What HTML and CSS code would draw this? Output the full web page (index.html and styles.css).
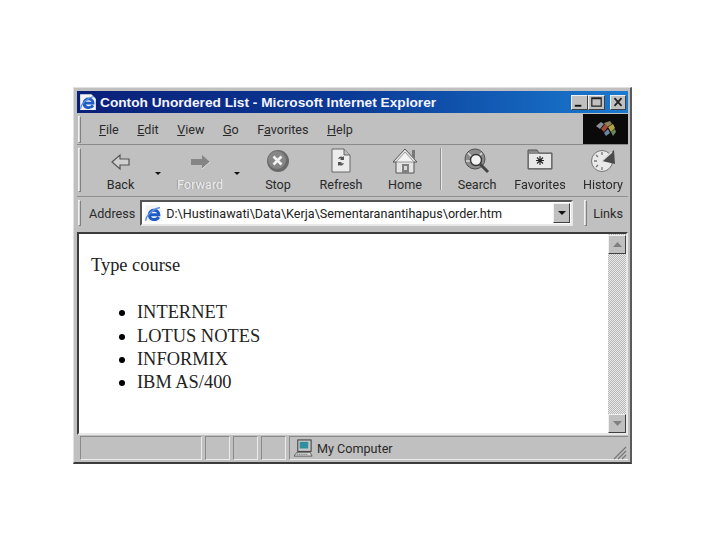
FILE: index.html
```html
<!DOCTYPE html>
<html lang="en">
<head>
<meta charset="utf-8">
<title>Contoh Unordered List - Microsoft Internet Explorer</title>
<link rel="stylesheet" href="styles.css">
</head>
<body>
<svg class="defs" width="0" height="0" aria-hidden="true">
  <defs>
    <symbol id="ie" viewBox="0 0 16 16">
      <path d="M1 1h10l4 4v10H1z" fill="#f4f4f4"/>
      <path d="M4.500 9h8c0-5-8-5-8 0s6 5 8 2" fill="none" stroke="#1f5cc4" stroke-width="2.500"/>
      <path d="M1.500 14c0-4 6-10 12-11" fill="none" stroke="#5d93e0" stroke-width="1.200"/>
    </symbol>
  </defs>
</svg>
<main class="window">
  <header class="titlebar">
    <svg class="title-icon" width="18" height="18"><use href="#ie"/></svg>
    <h1 class="title-text">Contoh Unordered List - Microsoft Internet Explorer</h1>
    <div class="caption-buttons">
      <span class="caption-btn"><svg width="16" height="14" viewBox="0 0 16 14"><rect x="3" y="10" width="7" height="2" fill="#111"/></svg></span>
      <span class="caption-btn"><svg width="16" height="14" viewBox="0 0 16 14"><path d="M3 2.500h10v9H3zM3 3.500h10" fill="none" stroke="#222" stroke-width="1.300"/></svg></span>
      <span class="caption-btn caption-close"><svg width="14" height="14" viewBox="0 0 16 14"><path d="M4 2.500l8 9M12 2.500l-8 9" stroke="#222" stroke-width="2"/></svg></span>
    </div>
  </header>

  <nav class="menubar">
    <span class="grip"></span>
    <ul class="menu-items">
      <li><u>F</u>ile</li>
      <li><u>E</u>dit</li>
      <li><u>V</u>iew</li>
      <li><u>G</u>o</li>
      <li>F<u>a</u>vorites</li>
      <li><u>H</u>elp</li>
    </ul>
    <div class="throbber">
      <svg width="26" height="22" viewBox="0 0 26 22">
        <path d="M3 8l5-4 3 2-4 5z" fill="#8a8e96"/>
        <path d="M11 5l6-2 2 3-5 3z" fill="#8f8454"/>
        <path d="M8 11l4-5 3 3-4 5z" fill="#a24a38"/>
        <path d="M15 9l5-3 2 4-4 4z" fill="#b3a24a"/>
        <path d="M11 15l4-4 2 4-4 3z" fill="#6a83a8"/>
        <path d="M18 14l4-3 1 3-3 4z" fill="#68885a"/>
      </svg>
    </div>
  </nav>

  <section class="toolbar">
    <span class="grip"></span>
    <div class="tool tool-back">
      <svg width="24" height="20" viewBox="0 0 24 20"><path d="M3 10l8-7v4h9v6h-9v4z" fill="#d0d0d0" stroke="#555" stroke-width="1.200"/></svg>
      <span>Back</span>
    </div>
    <svg class="drop drop-back" width="6" height="3" viewBox="0 0 6 3"><path d="M0 0h6L3 3z" fill="#111"/></svg>
    <div class="tool tool-forward">
      <svg width="24" height="20" viewBox="0 0 24 20"><path d="M22 10l-8-7v4H3v6h11v4z" fill="#858585"/><path d="M14 17l8-7" stroke="#e6e6e6"/></svg>
      <span class="disabled">Forward</span>
    </div>
    <svg class="drop drop-forward" width="6" height="3" viewBox="0 0 6 3"><path d="M0 0h6L3 3z" fill="#111"/></svg>
    <div class="tool tool-stop">
      <svg width="24" height="24" viewBox="0 0 24 24"><circle cx="12" cy="12" r="11" fill="#6a6a6a"/><circle cx="11" cy="11" r="9" fill="#868686"/><path d="M7.500 7.500l8 8M15.500 7.500l-8 8" stroke="#f2f2f2" stroke-width="2.600"/></svg>
      <span>Stop</span>
    </div>
    <div class="tool tool-refresh">
      <svg width="22" height="25" viewBox="0 0 22 25"><path d="M2 1h12l6 6v17H2z" fill="#ececec" stroke="#666"/><path d="M14 1v6h6" fill="#bbb" stroke="#666"/><path d="M8 11c1-3 4-3 5-2l1-1v4h-4l1-1c-1-1-2 0-3 0zM14 15c-1 3-4 3-5 2l-1 1v-4h4l-1 1c1 1 2 0 3 0z" fill="#555"/></svg>
      <span>Refresh</span>
    </div>
    <div class="tool tool-home">
      <svg width="26" height="26" viewBox="0 0 26 26"><path d="M20 2h3v9l-3-3z" fill="#777"/><path d="M13 1L1 14h3v11h18V14h3z" fill="#e4e4e4" stroke="#555"/><path d="M13 4L4 14h18z" fill="#f2f2f2" stroke="#777" stroke-width=".7"/><rect x="10" y="16" width="7" height="9" fill="#808080"/><rect x="12" y="18" width="3" height="4" fill="#d8d8d8"/></svg>
      <span>Home</span>
    </div>
    <span class="separator"></span>
    <div class="tool tool-search">
      <svg width="28" height="26" viewBox="0 0 28 26"><circle cx="12" cy="11" r="10" fill="#8c8c8c" stroke="#505050"/><path d="M5 5l4 4M19 5l-4 4M3 13h4" stroke="#dcdcdc" stroke-width="1.500"/><circle cx="13" cy="12" r="5.500" fill="#f2f2f2" stroke="#333" stroke-width="1.400"/><path d="M17 16l8 8" stroke="#444" stroke-width="3"/></svg>
      <span>Search</span>
    </div>
    <div class="tool tool-favorites">
      <svg width="26" height="22" viewBox="0 0 26 22"><path d="M1 5V2h9l2 3h13v16H1z" fill="#8a8a8a" stroke="#555"/><rect x="2" y="6" width="22" height="14" fill="#e8e8e8"/><path d="M13 8v9M9 12.500h8M10 9.500l6 6M16 9.500l-6 6" stroke="#222" stroke-width="1.100"/></svg>
      <span>Favorites</span>
    </div>
    <div class="tool tool-history">
      <svg width="26" height="24" viewBox="0 0 26 24"><circle cx="12" cy="13" r="10.500" fill="#e9e9e9" stroke="#777"/><path d="M12 13L24 2l1 14z" fill="#4a4a4a"/><path d="M12 13l10-9" stroke="#ddd" stroke-width="1.400"/><path d="M12 4v3M4 13h3M6 7l2 2M6 19l2-2M12 22v-3" stroke="#777" stroke-width="1.300"/></svg>
      <span>History</span>
    </div>
  </section>

  <section class="addressbar">
    <span class="grip"></span>
    <span class="address-label">Address</span>
    <div class="address-field">
      <svg class="page-icon" width="19" height="19"><use href="#ie"/></svg>
      <span class="address-text">D:\Hustinawati\Data\Kerja\Sementaranantihapus\order.htm</span>
      <span class="combo-btn"><svg width="8" height="4" viewBox="0 0 8 4"><path d="M0 0h8L4 4z" fill="#111"/></svg></span>
    </div>
    <span class="grip grip-links"></span>
    <span class="links-label">Links</span>
  </section>

  <section class="viewport">
    <article class="page">
      <p class="lead">Type course</p>
      <ul class="course-list">
        <li>INTERNET</li>
        <li>LOTUS NOTES</li>
        <li>INFORMIX</li>
        <li>IBM AS/400</li>
      </ul>
    </article>
    <div class="scrollbar">
      <span class="scroll-btn"><svg width="9" height="5" viewBox="0 0 9 5"><path d="M4.500 0L9 5H0z" fill="#808080"/></svg></span>
      <span class="scroll-track"></span>
      <span class="scroll-btn"><svg width="9" height="5" viewBox="0 0 9 5"><path d="M0 0h9L4.500 5z" fill="#808080"/></svg></span>
    </div>
  </section>

  <footer class="statusbar">
    <span class="status-cell status-main"></span>
    <span class="status-cell status-small"></span>
    <span class="status-cell status-small"></span>
    <span class="status-cell status-small"></span>
    <span class="status-zone">
      <svg width="19" height="19" viewBox="0 0 20 20"><rect x="4" y="1" width="14" height="12" fill="#c8c8c8" stroke="#333"/><rect x="6" y="3" width="9" height="7" fill="#2f8f9f"/><path d="M3 14h14l2 4H0z" fill="#d8d8d8" stroke="#444" stroke-width=".8"/><path d="M3 16h12" stroke="#444" stroke-dasharray="1 1"/></svg>
      My Computer
    </span>
    <svg class="resize-grip" width="15" height="15" viewBox="0 0 15 15"><path d="M14 2L2 14M14 6l-8 8M14 10l-4 4" stroke="#777" stroke-width="1.200"/></svg>
  </footer>
</main>
</body>
</html>
```
FILE: styles.css
```css
* { box-sizing: border-box; }
html, body { margin: 0; padding: 0; background: #fff; }
body { padding: 87px 0 0 73px; width: 720px; height: 540px; overflow: hidden; }
.defs { position: absolute; }

.window {
  width: 559px;
  height: 377px;
  background: #c0c0c0;
  border-top: 1px solid #e0e0e0;
  border-left: 1px solid #e0e0e0;
  border-right: 2px solid #5a5a5a;
  border-bottom: 2px solid #3c3c3c;
  padding: 3px 2px 0 3px;
  display: flex;
  flex-direction: column;
  font-family: Roboto, "Liberation Sans", Arial, sans-serif;
  font-size: 12.600px;
  color: #2a2a2a;
  filter: blur(0.4px);
}

.titlebar {
  height: 22px;
  flex: none;
  display: flex;
  align-items: center;
  padding: 0 2px 0 2px;
  background: linear-gradient(90deg, #0a1f78 0%, #0a3a96 50%, #1a7ad0 100%);
}
.title-icon { flex: none; margin-right: 3px; }
.title-text {
  margin: 0;
  font-family: "Liberation Sans", Arial, sans-serif;
  font-size: 13.700px;
  font-weight: bold;
  color: #f4f4ff;
  white-space: nowrap;
  flex: 1;
}
.caption-buttons { display: flex; }
.caption-btn {
  width: 17px;
  height: 15px;
  background: #c0c0c0;
  border: 1px solid;
  border-color: #efefef #404040 #404040 #efefef;
  display: flex;
  align-items: center;
  justify-content: center;
}
.caption-close { margin-left: 5px; width: 16px; }

.menubar {
  height: 31px;
  flex: none;
  margin-top: 1px;
  display: flex;
  align-items: stretch;
  border-bottom: 1px solid #8a8a8a;
  padding: 2px 0 1px 1px;
}
.grip {
  width: 3px;
  flex: none;
  background: #d4d4d4;
  border: 1px solid;
  border-color: #f0f0f0 #808080 #808080 #f0f0f0;
}
.menu-items {
  list-style: none;
  margin: 0;
  padding: 0 0 0 18px;
  display: flex;
  align-items: center;
  flex: 1;
  gap: 18.500px;
}
.menu-items li { white-space: nowrap; }
.throbber {
  width: 45px;
  margin: -2px 0 -1px;
  background: #0a0a0a;
  display: flex;
  align-items: center;
  justify-content: center;
}

.toolbar {
  height: 52px;
  flex: none;
  display: flex;
  align-items: stretch;
  position: relative;
  padding: 3px 0 4px 1px;
  border-bottom: 1px solid #909090;
}
.tool {
  position: absolute;
  top: 3px;
  width: 60px;
  height: 44px;
  display: flex;
  flex-direction: column;
  align-items: center;
  justify-content: flex-end;
  white-space: nowrap;
}
.tool svg { margin-bottom: auto; }
.tool span { line-height: 15px; }
.tool .disabled { color: #ececec; text-shadow: -1px 0 #9a9a9a; }
.tool-back { left: 13.500px; }
.tool-forward { left: 93px; }
.tool-stop { left: 171px; }
.tool-refresh { left: 234px; }
.tool-home { left: 298px; }
.tool-search { left: 370px; }
.tool-favorites { left: 433px; }
.tool-history { left: 496px; }
.tool-back svg, .tool-forward svg { margin-top: 4px; }
.tool-stop svg { margin-top: 1px; }
.drop { position: absolute; top: 27px; }
.drop-back { left: 78px; }
.drop-forward { left: 157px; }
.separator {
  position: absolute;
  left: 363px;
  top: 3px;
  height: 42px;
  width: 2px;
  border-left: 1px solid #8e8e8e;
  border-right: 1px solid #e6e6e6;
}

.addressbar {
  height: 35px;
  flex: none;
  display: flex;
  align-items: stretch;
  padding: 3px 0 6px 1px;
}
.address-label { margin: 0 5px 0 8px; line-height: 27px; }
.address-field {
  width: 433px;
  flex: none;
  display: flex;
  align-items: center;
  background: #fff;
  border: 2px solid;
  border-color: #555 #e8e8e8 #e8e8e8 #555;
  padding: 0 1px 0 2px;
}
.page-icon { flex: none; margin-right: 3px; }
.address-text { flex: 1; white-space: nowrap; color: #222; }
.combo-btn {
  width: 17px;
  height: 20px;
  flex: none;
  background: #c0c0c0;
  border: 1px solid;
  border-color: #f0f0f0 #404040 #404040 #f0f0f0;
  display: flex;
  align-items: center;
  justify-content: center;
}
.grip-links { margin-left: 11px; }
.links-label { margin-left: 6px; line-height: 27px; }

.viewport {
  flex: 1;
  min-height: 0;
  display: flex;
  background: #fff;
  border: 2px solid;
  border-color: #3c3c3c #e8e8e8 #e8e8e8 #3c3c3c;
}
.page {
  flex: 1;
  padding: 20px 0 0 12px;
  font-family: "Liberation Serif", "Times New Roman", serif;
  font-size: 18.400px;
  line-height: 23.300px;
  color: #222;
}
.lead { margin: 0 0 24px; }
.course-list { list-style: none; margin: 0; padding: 0 0 0 46px; }
.course-list li { display: flex; align-items: center; }
.course-list li::before {
  content: "";
  width: 6px;
  height: 6px;
  flex: none;
  margin: 1px 12px 0 -18px;
  border-radius: 50%;
  background: #000;
}
.scrollbar {
  width: 18px;
  flex: none;
  display: flex;
  flex-direction: column;
  background: repeating-conic-gradient(#b4b4b4 0 25%, #ececec 0 50%) 0 0 / 2px 2px;
  padding-top: 1px;
}
.scroll-btn {
  height: 19px;
  flex: none;
  background: #c0c0c0;
  border: 1px solid;
  border-color: #f0f0f0 #404040 #404040 #f0f0f0;
  display: flex;
  align-items: center;
  justify-content: center;
}
.scroll-track { flex: 1; }

.statusbar {
  height: 27px;
  flex: none;
  display: flex;
  align-items: stretch;
  padding: 1px 0 2px;
  position: relative;
}
.status-cell {
  flex: none;
  margin-right: 3px;
  border: 1px solid;
  border-color: #8a8a8a #ececec #ececec #8a8a8a;
}
.status-main { width: 122px; margin-left: 3px; }
.status-small { width: 25px; }
.status-zone {
  flex: 1;
  display: flex;
  align-items: center;
  gap: 4px;
  padding-left: 4px;
  border-top: 1px solid #8a8a8a;
  border-left: 1px solid #8a8a8a;
  border-bottom: 1px solid #ececec;
}
.resize-grip { position: absolute; right: 1px; bottom: 2px; }
```
